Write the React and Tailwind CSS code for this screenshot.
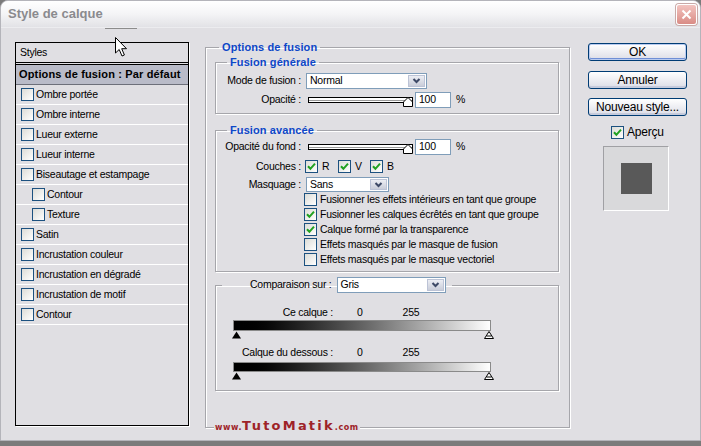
import React from 'react'

const LIST = [
  ['Ombre portée', false],
  ['Ombre interne', false],
  ['Lueur externe', false],
  ['Lueur interne', false],
  ['Biseautage et estampage', false],
  ['Contour', true],
  ['Texture', true],
  ['Satin', false],
  ['Incrustation couleur', false],
  ['Incrustation en dégradé', false],
  ['Incrustation de motif', false],
  ['Contour', false],
]

const MASK_OPTS = [
  ['Fusionner les effets intérieurs en tant que groupe', false],
  ['Fusionner les calques écrêtés en tant que groupe', true],
  ['Calque formé par la transparence', true],
  ['Effets masqués par le masque de fusion', false],
  ['Effets masqués par le masque vectoriel', false],
]

const Box = ({ checked }) => (
  <span className="w-[13px] h-[13px] shrink-0 border border-[#1c5180] bg-linear-to-br from-[#dcdcd7] to-white flex items-center justify-center">
    {checked && (
      <svg width="9" height="9" viewBox="0 0 9 9">
        <path d="M1 4.2 L3.4 6.8 L8 1.6" stroke="#21a121" strokeWidth="2" fill="none" />
      </svg>
    )}
  </span>
)

const Select = ({ value, className }) => (
  <div className={`flex items-stretch bg-white border border-[#7f9db9] ${className}`}>
    <span className="flex-1 pl-[3px] flex items-center">{value}</span>
    <span className="w-[17px] m-px bg-linear-to-b from-[#eceef4] to-[#c9cdd9] border border-[#bcc3d6] flex items-center justify-center">
      <svg width="9" height="6" viewBox="0 0 9 6">
        <path d="M1.5 1 L4.5 4 L7.5 1" stroke="#3d4966" strokeWidth="2" fill="none" />
      </svg>
    </span>
  </div>
)

const Slider = () => (
  <svg width="107" height="16" viewBox="0 0 107 16" className="shrink-0">
    <rect x="0.5" y="5.5" width="104" height="5" fill="#fff" stroke="#000" />
    <line x1="1" y1="8.5" x2="104" y2="8.5" stroke="#9a9a9a" />
    <polygon points="95.5,14.5 95.5,10 100,5.5 104.5,10 104.5,14.5" fill="#fff" stroke="#000" />
  </svg>
)

const Num = ({ value }) => (
  <div className="w-[36px] h-[16px] bg-white border border-[#7f9db9] pl-[3px] flex items-center shrink-0">
    {value}
  </div>
)

const Marks = () => (
  <div className="ml-[16px] w-[262px] h-[8px] flex justify-between">
    <svg width="9" height="8" viewBox="0 0 9 8">
      <polygon points="0,7.5 4.5,0.5 9,7.5" fill="#000" />
    </svg>
    <svg width="10" height="8" viewBox="0 0 10 8">
      <polygon points="0.5,7.5 5,0.5 9.5,7.5" fill="#fff" stroke="#000" />
      <line x1="2.5" y1="5" x2="7.5" y2="5" stroke="#000" />
    </svg>
  </div>
)

const Button = ({ children, primary }) => (
  <div
    className={`w-[99px] h-[18px] rounded-[3px] border border-[#003c74] bg-linear-to-b from-white to-[#dcdde6] flex items-center justify-center text-[12px] tracking-[-0.2px] ${
      primary
        ? 'shadow-[inset_0_0_0_1px_#b9cbf0,inset_0_-1px_0_1px_#6f8fd6]'
        : 'shadow-[inset_0_-2px_0_#c6cbdc]'
    }`}
  >
    {children}
  </div>
)

const Legend = ({ children }) => (
  <legend className="ml-[11px] px-[3px] leading-[13px] text-[11px] font-bold text-[#0d47c8] tracking-[0.1px]">
    {children}
  </legend>
)

const fieldBox = 'border border-[#a6a6ab] shadow-[1px_1px_0_#fff,inset_1px_1px_0_#fff]'

export default function App() {
  return (
    <div className="w-[701px] h-[446px] relative overflow-hidden bg-[#7b7b7b] text-black text-[10.5px] tracking-[-0.25px] font-['Liberation_Sans',Arial,sans-serif]">
      <div className="h-[441px] rounded-t-[8px] border border-[#b4b4ba] bg-[#e0dfe3] flex flex-col overflow-hidden">
        {/* title bar */}
        <div className="h-[27px] shrink-0 flex items-center justify-between pl-[7px] pr-[3px] bg-linear-to-b from-white via-[#f4f4f6] to-[#e2e2e6] border-b border-[#ececef]">
          <span className="text-[13px] font-bold text-[#8a8a8e] tracking-[0px]">Style de calque</span>
          <div className="w-[21px] h-[21px] rounded-[3px] border border-white bg-linear-to-b from-[#f2c4c0] to-[#d98c86] flex items-center justify-center shadow-[0_0_0_1px_#c9aaa8]">
            <svg width="11" height="11" viewBox="0 0 11 11">
              <path d="M1.5 1.5 L9.5 9.5 M9.5 1.5 L1.5 9.5" stroke="#fff" strokeWidth="2" />
            </svg>
          </div>
        </div>

        {/* body */}
        <div className="flex items-start">
          {/* style list */}
          <div className="ml-[14px] mt-[14px] w-[174px] h-[384px] border border-black shadow-[1px_1px_0_#fff] flex flex-col">
            <div className="h-[19px] pl-[4px] flex items-center">Styles</div>
            <div className="h-[3px] border-y border-black" />
            <div className="h-[20px] pl-[3px] bg-[#b9bbc8] border-b border-[#6d6f7a] flex items-center text-[11px] font-bold tracking-[0.15px]">
              Options de fusion : Par défaut
            </div>
            {LIST.map(([label, sub], i) => (
              <div
                key={i}
                className={`h-[20px] shrink-0 border-b border-white flex items-center gap-[2px] ${sub ? 'pl-[16px]' : 'pl-[5px]'}`}
              >
                <Box />
                <span>{label}</span>
              </div>
            ))}
          </div>

          {/* blending options */}
          <fieldset className={`ml-[16px] mt-[13px] w-[365px] h-[387px] pl-[9px] ${fieldBox}`}>
            <legend className="ml-[4px] px-[3px] leading-[13px] text-[11px] font-bold text-[#0d47c8] tracking-[0.1px]">
              Options de fusion
            </legend>

            <fieldset className={`mt-[2px] w-[344px] pb-[5px] ${fieldBox}`}>
              <Legend>Fusion générale</Legend>
              <div className="mt-[4px] h-[16px] flex items-center">
                <span className="w-[85px] text-right">Mode de fusion :</span>
                <Select value="Normal" className="ml-[5px] w-[121px] h-[16px]" />
              </div>
              <div className="mt-[3px] h-[16px] flex items-center">
                <span className="w-[85px] text-right">Opacité :</span>
                <span className="ml-[7px]"><Slider /></span>
                <Num value="100" />
                <span className="ml-[5px]">%</span>
              </div>
            </fieldset>

            <fieldset className={`mt-[10px] w-[344px] pb-[4px] ${fieldBox}`}>
              <Legend>Fusion avancée</Legend>
              <div className="mt-[2px] h-[16px] flex items-center">
                <span className="w-[85px] text-right">Opacité du fond :</span>
                <span className="ml-[7px]"><Slider /></span>
                <Num value="100" />
                <span className="ml-[5px]">%</span>
              </div>
              <div className="mt-[5px] h-[13px] flex items-center">
                <span className="w-[85px] text-right">Couches :</span>
                <div className="ml-[4px] w-[33px] flex items-center gap-[4px]"><Box checked /><span>R</span></div>
                <div className="w-[32px] flex items-center gap-[4px]"><Box checked /><span>V</span></div>
                <div className="flex items-center gap-[4px]"><Box checked /><span>B</span></div>
              </div>
              <div className="mt-[4px] h-[15px] flex items-center">
                <span className="w-[85px] text-right">Masquage :</span>
                <Select value="Sans" className="ml-[5px] w-[83px] h-[15px]" />
              </div>
              {MASK_OPTS.map(([label, on], i) => (
                <div key={i} className="h-[15px] pl-[88px] flex items-center gap-[3px]">
                  <Box checked={on} />
                  <span>{label}</span>
                </div>
              ))}
            </fieldset>

            <fieldset className={`mt-[5px] w-[344px] pb-[10px] ${fieldBox}`}>
              <legend className="ml-[6px] pl-[28px] pr-[6px]">
                <div className="flex items-center h-[16px]">
                  <span>Comparaison sur :</span>
                  <Select value="Gris" className="ml-[5px] w-[109px] h-[16px]" />
                </div>
              </legend>
              <div className="mt-[13px] h-[13px] flex items-center">
                <span className="w-[117px] text-right">Ce calque :</span>
                <span className="ml-[24px]">0</span>
                <span className="ml-[40px]">255</span>
              </div>
              <div className="mt-px ml-[17px] w-[258px] h-[11px] border border-[#8a8a8a] bg-linear-to-r from-black to-white" />
              <Marks />
              <div className="mt-[7px] h-[13px] flex items-center">
                <span className="w-[117px] text-right">Calque du dessous :</span>
                <span className="ml-[24px]">0</span>
                <span className="ml-[40px]">255</span>
              </div>
              <div className="mt-[3px] ml-[17px] w-[258px] h-[10px] border border-[#8a8a8a] bg-linear-to-r from-black to-white" />
              <Marks />
            </fieldset>
          </fieldset>

          {/* buttons */}
          <div className="ml-[18px] mt-[15px] w-[99px] flex flex-col">
            <Button primary>OK</Button>
            <div className="mt-[10px]"><Button>Annuler</Button></div>
            <div className="mt-[9px]"><Button>Nouveau style...</Button></div>
            <div className="mt-[7px] ml-[23px] flex items-center gap-[3px] text-[12px] tracking-[-0.2px]">
              <Box checked />
              <span>Aperçu</span>
            </div>
            <div className="mt-[5px] ml-[15px] w-[66px] h-[65px] bg-[#d9d9db] border border-t-[#a0a0a4] border-l-[#a0a0a4] border-r-white border-b-white flex items-center justify-center">
              <div className="w-[31px] h-[31px] bg-[#595959]" />
            </div>
          </div>
        </div>
      </div>

      {/* watermark over the frame edge */}
      <div className="absolute left-[214px] top-[419px] px-[1px] bg-[#e0dfe3] text-[#9e2328] font-['DejaVu_Sans',Verdana,sans-serif] font-bold tracking-[0.6px] flex items-baseline leading-[14px]">
        <span className="text-[8px]">www.</span>
        <span className="text-[13px] tracking-[2.2px]">TutoMatik</span>
        <span className="text-[8px]">.com</span>
      </div>

      {/* screen artefacts: stray line and mouse pointer */}
      <div className="absolute left-[105px] top-[28px] w-[32px] h-px bg-[#8c8c8c]" />
      <svg className="absolute left-[115px] top-[37px]" width="13" height="21" viewBox="0 0 13 21">
        <path d="M0.5 0.5 L0.5 16 L4.2 12.5 L7 19 L9.4 18 L6.7 11.7 L11.5 11.7 Z" fill="#fff" stroke="#000" />
      </svg>
    </div>
  )
}
